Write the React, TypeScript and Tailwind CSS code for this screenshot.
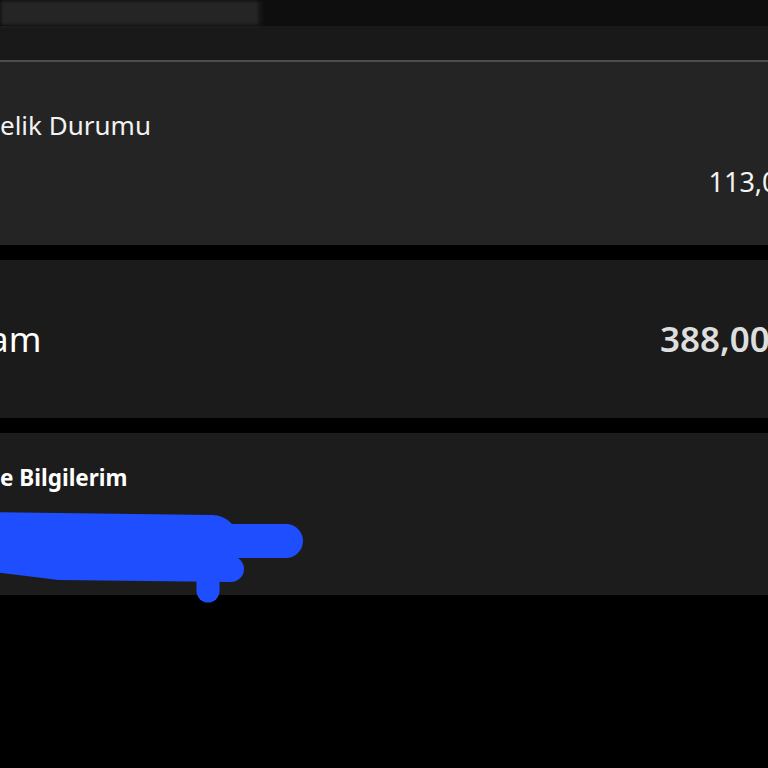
import React from 'react';

const font = { fontFamily: '"Noto Sans", "Open Sans", sans-serif' };

const Scribble: React.FC = () => (
  <svg className="absolute left-0 top-0" width="320" height="175" viewBox="0 433 320 175" aria-hidden>
    <g stroke="#1f4eff" strokeLinecap="round" strokeLinejoin="round" fill="none">
      <line x1="-30" y1="539" x2="212" y2="542" strokeWidth="54" />
      <line x1="212" y1="541" x2="286" y2="541" strokeWidth="34" />
      <polyline points="-30,556 60,567 231,569" strokeWidth="26" />
      <line x1="208" y1="570" x2="208" y2="591" strokeWidth="23" />
    </g>
  </svg>
);

export default function App() {
  return (
    <div className="w-[768px] h-[768px] bg-black overflow-hidden text-white" style={font}>
      {/* status / header strip */}
      <div className="flex h-[26px]">
        <div className="w-[260px] bg-[#252525] blur-[2px]" />
        <div className="flex-1 bg-[#0e0e0e]" />
      </div>
      <div className="h-[34px] bg-[#191919]" />
      <div className="h-[2px] bg-[#4d4d4d]" />

      {/* Üyelik Durumu */}
      <section className="h-[183px] bg-[#242424] pt-[102px] relative">
        <div className="absolute left-0 top-[45px] text-[26px] leading-[36px] text-[#f2f2f2] whitespace-nowrap">
          elik Durumu
        </div>
        <div className="w-[803px] flex justify-end pr-[10px]">
          <span className="text-[27px] leading-[36px] text-[#f4f4f4] whitespace-nowrap">113,00</span>
        </div>
      </section>

      <div className="h-[15px]" />

      {/* Toplam */}
      <section className="h-[158px] bg-[#1b1b1b] flex items-center overflow-hidden">
        <div className="w-[828px] shrink-0 flex justify-between items-center">
          <span className="-ml-[11px] text-[35px] leading-[44px] text-white">am</span>
          <span className="text-[35px] leading-[44px] font-semibold text-[#dedede] whitespace-nowrap pr-[10px]">388,00 TL</span>
        </div>
      </section>

      <div className="h-[15px]" />

      {/* Bilgilerim */}
      <section className="h-[162px] bg-[#1c1c1c] relative">
        <div className="pt-[29px] text-[22.5px] leading-[32px] font-bold text-white whitespace-nowrap">e Bilgilerim</div>
        <Scribble />
      </section>
    </div>
  );
}
